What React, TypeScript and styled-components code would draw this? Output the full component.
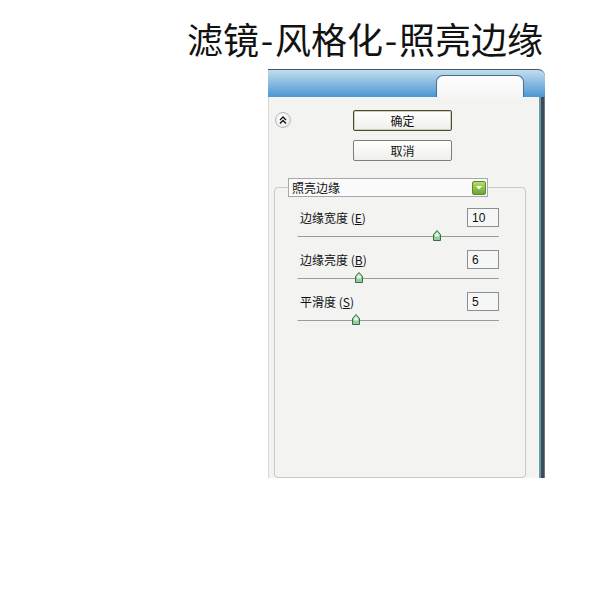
import React from 'react'
import styled, { createGlobalStyle } from 'styled-components'

type Param = {
  label: string
  key: string
  value: number
  min: number
  max: number
}

const params: Param[] = [
  { label: '边缘宽度', key: 'E', value: 10, min: 1, max: 14 },
  { label: '边缘亮度', key: 'B', value: 6, min: 0, max: 20 },
  { label: '平滑度', key: 'S', value: 5, min: 1, max: 15 },
]

const GlobalStyle = createGlobalStyle`
  html, body {
    margin: 0;
    padding: 0;
    background: #fff;
  }
  body {
    font-family: "Noto Sans CJK SC", "Liberation Sans", sans-serif;
    color: #111;
  }
`

const Page = styled.div`
  width: 600px;
  height: 600px;
  overflow: hidden;
  background: #fff;
`

const Title = styled.h1`
  margin: 0;
  height: 51px;
  padding: 18px 57px 0 0;
  text-align: right;
  font-size: 36px;
  font-weight: 400;
  line-height: 40px;
  color: #121212;
  box-sizing: content-box;
`

const Dash = styled.span`
  display: inline-block;
  width: 16px;
  text-align: center;
`

const Panel = styled.div`
  margin-left: 268px;
  width: 277px;
  height: 409px;
  display: flex;
  flex-direction: column;
`

const Header = styled.div`
  height: 27px;
  flex-shrink: 0;
  display: flex;
  justify-content: flex-end;
  align-items: flex-end;
  padding-right: 21px;
  border-top: 1px solid #3a5870;
  border-top-right-radius: 7px;
  background: linear-gradient(#c3dcee 0%, #8dbde2 45%, #4a97d2 100%);
`

const Tab = styled.div`
  width: 86px;
  height: 21px;
  background: linear-gradient(#fdfdfd, #f5f6f6);
  border: 1px solid #4c7088;
  border-bottom: none;
  border-radius: 7px 7px 0 0;
`

const Body = styled.div`
  flex: 1;
  display: flex;
`

const Content = styled.div`
  flex: 1;
  display: flex;
  flex-direction: column;
  background: #f3f3f1;
  border-left: 1px solid #d6d6d6;
`

const Strip = styled.div`
  width: 7px;
  background: linear-gradient(
    to right,
    #f8f8f8 0 1px,
    #5f9cad 1px 3px,
    #3f4a55 3px 6px,
    #6c7a85 6px
  );
`

const TopArea = styled.div`
  display: grid;
  grid-template-columns: 78px 99px;
  padding: 13px 0 0 6px;
`

const CollapseButton = styled.div`
  width: 14px;
  height: 14px;
  margin-top: 2px;
  display: flex;
  align-items: center;
  justify-content: center;
  border-radius: 50%;
  border: 1px solid #b8b8b8;
  background: radial-gradient(circle at 40% 35%, #ffffff, #e4e4e4);
`

const Buttons = styled.div`
  display: flex;
  flex-direction: column;
  gap: 9px;
`

const Button = styled.div<{ $primary?: boolean }>`
  height: 21px;
  box-sizing: border-box;
  display: flex;
  align-items: center;
  justify-content: center;
  font-size: 12px;
  border-radius: 2px;
  border: 1px solid ${(p) => (p.$primary ? '#4b4b33' : '#7d7d7d')};
  box-shadow: ${(p) => (p.$primary ? 'inset 0 0 0 1px #cfd0bc' : 'none')};
  background: linear-gradient(#ffffff, #efefea);
`

const Group = styled.div`
  flex: 1;
  margin: 26px 12px 0 5px;
  border: 1px solid #c9c9c9;
  border-radius: 4px;
  display: flex;
  flex-direction: column;
`

const Select = styled.div`
  width: 200px;
  height: 19px;
  box-sizing: border-box;
  margin: -10px 0 0 13px;
  display: flex;
  align-items: center;
  justify-content: space-between;
  padding: 0 1px 0 3px;
  border: 1px solid #a7a7a7;
  background: #fbfbfb;
  font-size: 12px;
`

const SelectArrow = styled.div`
  width: 14px;
  height: 14px;
  box-sizing: border-box;
  display: flex;
  align-items: center;
  justify-content: center;
  border: 1px solid #5d8a2b;
  border-radius: 2px;
  background: linear-gradient(#b4dc6c, #6da632);
`

const Params = styled.div`
  display: flex;
  flex-direction: column;
  padding: 11px 26px 0 24px;
`

const ParamBlock = styled.div`
  height: 42px;
`

const ParamRow = styled.div`
  display: flex;
  align-items: center;
  justify-content: space-between;
  height: 19px;
`

const Label = styled.span`
  padding-left: 1px;
  font-size: 12px;
  u {
    text-decoration: underline;
  }
`

const NumberBox = styled.div`
  width: 32px;
  height: 19px;
  box-sizing: border-box;
  padding: 0 4px;
  display: flex;
  align-items: center;
  border: 1px solid #8f8f8f;
  background: #f5f6f6;
  font-family: "Liberation Sans", sans-serif;
  font-size: 12px;
`

const Slider = styled.div`
  position: relative;
  height: 12px;
  margin-top: 3px;
`

const Track = styled.div`
  position: absolute;
  left: -2px;
  right: 0;
  top: 6px;
  height: 1px;
  background: #9a9a9a;
  border-left: 1px solid #cfcfcf;
`

const Thumb = styled.svg`
  position: absolute;
  top: 0;
  margin-left: -4px;
`

const ParamControl: React.FC<{ param: Param }> = ({ param }) => {
  const ratio = (param.value - param.min) / (param.max - param.min)
  return (
    <ParamBlock>
      <ParamRow>
        <Label>
          {param.label} (<u>{param.key}</u>)
        </Label>
        <NumberBox>{param.value}</NumberBox>
      </ParamRow>
      <Slider>
        <Track />
        <Thumb
          width="8"
          height="11"
          viewBox="0 0 8 11"
          style={{ left: `${ratio * 100}%` }}
        >
          <path
            d="M4 0.5 L7.5 4.5 L7.5 10.5 L0.5 10.5 L0.5 4.5 Z"
            fill="#8fcf9a"
            stroke="#3c6b48"
            strokeWidth="1"
          />
          <path d="M4 2.2 L6 4.6 L6 6.5 L2 6.5 L2 4.6 Z" fill="#e9f7ea" />
        </Thumb>
      </Slider>
    </ParamBlock>
  )
}

const App: React.FC = () => (
  <Page>
    <GlobalStyle />
    <Title>
      滤镜<Dash>-</Dash>风格化<Dash>-</Dash>照亮边缘
    </Title>
    <Panel>
      <Header>
        <Tab />
      </Header>
      <Body>
        <Content>
          <TopArea>
            <CollapseButton>
              <svg width="8" height="8" viewBox="0 0 8 8">
                <path
                  d="M1 4 L4 1 L7 4 M1 7.5 L4 4.5 L7 7.5"
                  fill="none"
                  stroke="#111"
                  strokeWidth="1.3"
                />
              </svg>
            </CollapseButton>
            <Buttons>
              <Button $primary>确定</Button>
              <Button>取消</Button>
            </Buttons>
          </TopArea>
          <Group>
            <Select>
              <span>照亮边缘</span>
              <SelectArrow>
                <svg width="6" height="4" viewBox="0 0 6 4">
                  <path d="M0 0 L6 0 L3 3.5 Z" fill="#fff" />
                </svg>
              </SelectArrow>
            </Select>
            <Params>
              {params.map((p) => (
                <ParamControl key={p.key} param={p} />
              ))}
            </Params>
          </Group>
        </Content>
        <Strip />
      </Body>
    </Panel>
  </Page>
)

export default App
